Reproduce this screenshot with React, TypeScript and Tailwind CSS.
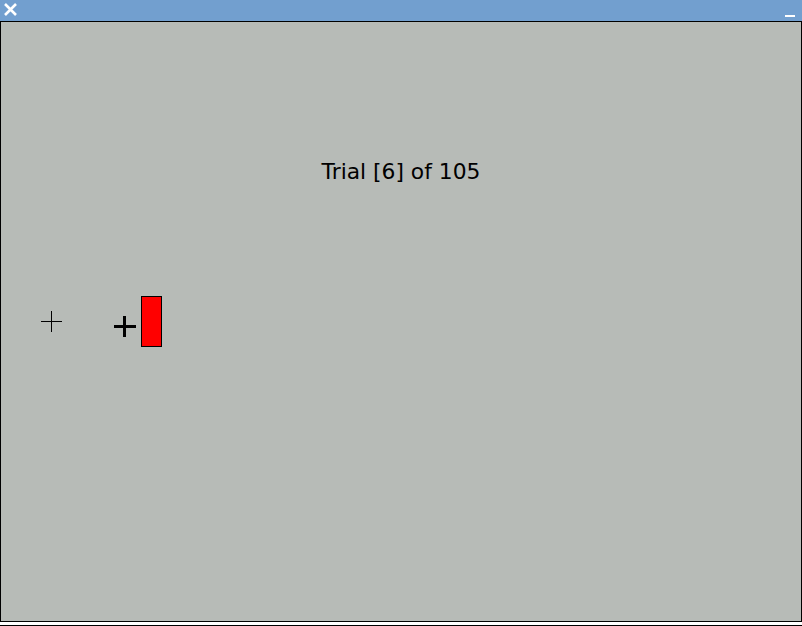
import React from "react";

export default function App() {
  return (
    <div className="w-[802px] h-[626px] flex flex-col bg-white" style={{ fontFamily: '"DejaVu Sans", sans-serif' }}>
      <div className="h-[21px] bg-[#729fcf] flex items-start justify-between shrink-0">
        <svg width="20" height="20" viewBox="0 0 20 20" className="shrink-0">
          <path d="M5 4 L16 15 M16 4 L5 15" stroke="#ffffff" strokeWidth="2.6" />
        </svg>
        <div className="w-[10px] h-[2px] bg-white mr-[7px] mt-[15px]" />
      </div>
      <div className="relative flex-1 bg-[#b7bbb7] border border-black">
        <div className="pt-[138px] text-center text-[21.8px] leading-[24px] text-black">Trial [6] of 105</div>
        {/* small fixation cross */}
        <div className="absolute left-[40px] top-[299px] w-[21px] h-[1px] bg-black" />
        <div className="absolute left-[50px] top-[289px] w-[1px] h-[21px] bg-black" />
        {/* big cross */}
        <div className="absolute left-[113px] top-[303px] w-[22px] h-[3px] bg-black" />
        <div className="absolute left-[122px] top-[294px] w-[3px] h-[21px] bg-black" />
        {/* red stimulus */}
        <div className="absolute left-[140px] top-[274px] w-[21px] h-[51px] bg-[#ff0000] border border-black" />
      </div>
      <div className="h-[3px] bg-white shrink-0" />
      <div className="h-[1px] bg-black shrink-0" />
    </div>
  );
}
